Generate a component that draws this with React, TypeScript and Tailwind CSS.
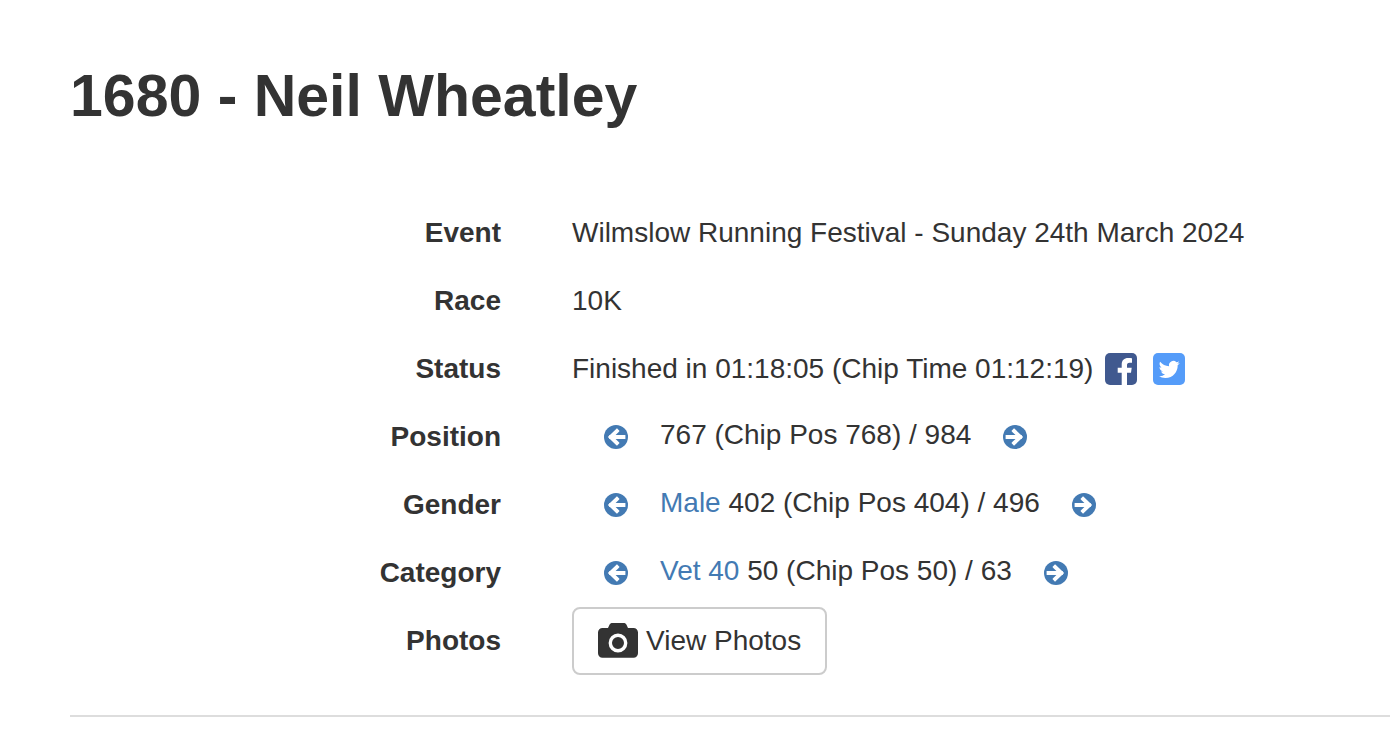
import React from "react";

const ArrowIcon = ({ direction }: { direction: "left" | "right" }) => (
  <svg
    viewBox="0 0 24 24"
    className={`w-6 h-6 shrink-0 ${direction === "right" ? "rotate-180" : ""}`}
    aria-hidden="true"
  >
    <circle cx="12" cy="12" r="12" fill="currentColor" />
    <path
      d="M12.900 6 L6.600 12 L12.900 18 M7 12 H19.500"
      fill="none"
      stroke="#fff"
      strokeWidth="3.800"
      strokeLinecap="square"
    />
  </svg>
);

const FacebookIcon = () => (
  <svg viewBox="0 0 32 32" className="w-8 h-8" aria-hidden="true">
    <rect width="32" height="32" rx="5" fill="#40598f" />
    <path
      d="M16.700 32V19.700h-4v-5h4v-3.300c0-4.100 2.500-6.400 6.400-6.400 1.700 0 3.200.1 3.900.2v4.500h-2.500c-2 0-2.500 1-2.500 2.400v2.600h4.700l-.7 5H22V32z"
      fill="#fff"
    />
  </svg>
);

const TwitterIcon = () => (
  <svg viewBox="0 0 32 32" className="w-8 h-8" aria-hidden="true">
    <rect width="32" height="32" rx="5" fill="#559cf9" />
    <path
      transform="translate(5.700 5.900) scale(.88)"
      d="M23.950 4.570a10 10 0 0 1-2.820.770 4.960 4.960 0 0 0 2.160-2.720c-.95.550-2 .950-3.130 1.180a4.920 4.920 0 0 0-8.380 4.480C7.690 8.090 4.070 6.130 1.640 3.160a4.820 4.820 0 0 0-.67 2.480c0 1.710.87 3.210 2.190 4.100a4.900 4.900 0 0 1-2.230-.620v.060a4.920 4.920 0 0 0 3.950 4.830 5 5 0 0 1-2.210.080 4.940 4.940 0 0 0 4.600 3.420A9.870 9.870 0 0 1 0 19.540a13.990 13.990 0 0 0 7.550 2.210c9.050 0 14-7.500 14-13.980 0-.21 0-.42-.02-.63a9.940 9.940 0 0 0 2.420-2.570z"
      fill="#fff"
    />
  </svg>
);

const CameraIcon = () => (
  <svg viewBox="0 0 40 36" className="w-10 h-9" aria-hidden="true">
    <path
      d="M4.500 5H10L11.400 2C12.100.600 13 0 14.500 0h11c1.500 0 2.400.600 3.100 2L30 5h5.500C38 5 40 7 40 9.500v20.700c0 2.500-2 4.500-4.500 4.500h-31C2 34.700 0 32.700 0 30.200V9.500C0 7 2 5 4.500 5z"
      fill="#333"
    />
    <circle cx="20" cy="20" r="7.700" fill="none" stroke="#fff" strokeWidth="3.400" />
  </svg>
);

const Row = ({ label, children }: { label: string; children: React.ReactNode }) => (
  <div className="flex h-[68px] items-center">
    <dt className="w-[431px] shrink-0 text-right font-bold">{label}</dt>
    <dd className="ml-[71px] flex items-center whitespace-nowrap">{children}</dd>
  </div>
);

const Ranking = ({
  name,
  group,
  result,
}: {
  name: string;
  group?: string;
  result: string;
}) => (
  <div className="flex items-center gap-8 pl-8">
    <a href="#" aria-label={`Previous in ${name}`} className="text-[#437ab3]">
      <ArrowIcon direction="left" />
    </a>
    <span className="pb-1">
      {group && (
        <a href="#" className="text-[#437ab3]">
          {group}
        </a>
      )}
      {group && " "}
      {result}
    </span>
    <a href="#" aria-label={`Next in ${name}`} className="text-[#437ab3]">
      <ArrowIcon direction="right" />
    </a>
  </div>
);

export default function App() {
  return (
    <main className="min-h-screen overflow-x-hidden bg-white pl-[70px] pt-[63px] pb-9 font-['Liberation_Sans',Arial,sans-serif] text-[28px] leading-10 text-[#333]">
      <h2 className="text-[59px] font-bold leading-[66px]">1680 - Neil Wheatley</h2>
      <dl className="mt-[70px]">
        <Row label="Event">Wilmslow Running Festival - Sunday 24th March 2024</Row>
        <Row label="Race">10K</Row>
        <Row label="Status">
          Finished in 01:18:05 (Chip Time 01:12:19)
          <a href="#" aria-label="Share on Facebook" className="ml-3">
            <FacebookIcon />
          </a>
          <a href="#" aria-label="Share on Twitter" className="ml-4">
            <TwitterIcon />
          </a>
        </Row>
        <Row label="Position">
          <Ranking name="position" result="767 (Chip Pos 768) / 984" />
        </Row>
        <Row label="Gender">
          <Ranking name="gender" group="Male" result="402 (Chip Pos 404) / 496" />
        </Row>
        <Row label="Category">
          <Ranking name="category" group="Vet 40" result="50 (Chip Pos 50) / 63" />
        </Row>
        <Row label="Photos">
          <button
            type="button"
            className="flex h-[68px] items-center gap-2 rounded-lg border-2 border-[#ccc] bg-white px-6"
          >
            <CameraIcon />
            View Photos
          </button>
        </Row>
      </dl>
      <hr className="mt-10 border-t-2 border-[#ddd]" />
    </main>
  );
}
